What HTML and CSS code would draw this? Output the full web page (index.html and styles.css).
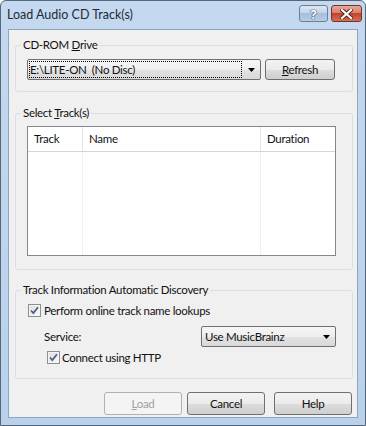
FILE: index.html
```html
<!DOCTYPE html>
<html lang="en">
<head>
    <meta charset="UTF-8">
    <meta name="viewport" content="width=device-width, initial-scale=1.0">
    <title>Load Audio CD Track(s)</title>
    <link rel="stylesheet" href="styles.css">
</head>
<body>
    <div class="window">
        <!-- Barra de titulo -->
        <div class="titlebar">
            <span class="title">Load Audio CD Track(s)</span>
            <div class="caption-buttons">
                <span class="cbtn help">?</span>
                <span class="cbtn close">
                    <svg width="13" height="10" viewBox="0 0 13 10">
                        <path d="M2 1 L11 9 M11 1 L2 9" stroke="#5a2218" stroke-width="4" stroke-linecap="square"/>
                        <path d="M2 1 L11 9 M11 1 L2 9" stroke="#ffffff" stroke-width="2.2" stroke-linecap="square"/>
                    </svg>
                </span>
            </div>
        </div>

        <div class="client">
            <!-- Unidad de CD -->
            <fieldset class="group drive">
                <legend>CD-ROM <u>D</u>rive</legend>
                <div class="drive-row">
                    <div class="combo wide">
                        <span class="combo-text focused">E:\LITE-ON&nbsp; (No Disc)</span>
                        <span class="combo-arrow">
                            <svg width="7" height="4" viewBox="0 0 7 4"><polygon points="0,0 7,0 3.5,4" fill="#000"/></svg>
                        </span>
                    </div>
                    <button class="btn refresh"><u>R</u>efresh</button>
                </div>
            </fieldset>

            <!-- Lista de pistas -->
            <fieldset class="group tracks">
                <legend>Select <u>T</u>rack(s)</legend>
                <div class="listview">
                    <div class="lv-header">
                        <span class="col">Track</span>
                        <span class="col">Name</span>
                        <span class="col last">Duration</span>
                    </div>
                    <div class="lv-body">
                        <span class="col"></span>
                        <span class="col"></span>
                        <span class="col last"></span>
                    </div>
                </div>
            </fieldset>

            <!-- Busqueda automatica -->
            <fieldset class="group discovery">
                <legend>Track Information Automatic Discovery</legend>
                <label class="check-row first">
                    <span class="checkbox">
                        <svg width="13" height="13" viewBox="0 0 13 13">
                            <path d="M3 6.5 L5.3 9 L10 3.2" fill="none" stroke="#4b6189" stroke-width="1.8"/>
                        </svg>
                    </span>
                    Perform online track name lookups
                </label>
                <div class="service-row">
                    <span>Service:</span>
                    <div class="combo small">
                        <span class="combo-text">Use MusicBrainz</span>
                        <span class="combo-arrow">
                            <svg width="7" height="4" viewBox="0 0 7 4"><polygon points="0,0 7,0 3.5,4" fill="#000"/></svg>
                        </span>
                    </div>
                </div>
                <label class="check-row second">
                    <span class="checkbox">
                        <svg width="13" height="13" viewBox="0 0 13 13">
                            <path d="M3 6.5 L5.3 9 L10 3.2" fill="none" stroke="#4b6189" stroke-width="1.8"/>
                        </svg>
                    </span>
                    Connect using HTTP
                </label>
            </fieldset>

            <!-- Botones -->
            <div class="actions">
                <button class="btn disabled"><u>L</u>oad</button>
                <button class="btn">Cancel</button>
                <button class="btn help-btn">Help</button>
            </div>
        </div>
    </div>
</body>
</html>
```

FILE: styles.css
```css
/* Ventana de dialogo estilo Vista */
body {
    margin: 0;
    font-family: Lato, "Noto Sans", sans-serif;
    font-size: 11.5px;
    letter-spacing: -0.3px;
    color: #111;
}

.window {
    width: 366px;
    height: 426px;
    box-sizing: border-box;
    border: 1px solid #55677a;
    border-radius: 6px 6px 0 0;
    background: linear-gradient(#c4d9ef, #b9d1ea);
    padding: 0 7px 7px 7px;
    display: flex;
    flex-direction: column;
}

.titlebar {
    height: 28px;
    display: flex;
    align-items: flex-start;
    justify-content: space-between;
}

.title {
    margin-top: 6px;
    margin-left: -1px;
    font-size: 12.5px;
    letter-spacing: 0;
    line-height: 16px;
    color: #1e2a36;
}

.caption-buttons {
    display: flex;
    gap: 3px;
    margin-top: 4px;
    margin-right: -4px;
}

.cbtn {
    height: 17px;
    box-sizing: border-box;
    border: 1px solid #6b7f98;
    border-radius: 3px;
    display: flex;
    align-items: center;
    justify-content: center;
}

.cbtn.help {
    width: 29px;
    background: linear-gradient(#dbe7f4 0%, #c3d5ea 45%, #a7bfdc 50%, #b7cce4 100%);
    color: #fff;
    font-family: "Noto Sans", sans-serif;
    font-weight: bold;
    font-size: 13px;
    text-shadow: 0 0 1px #30445e, 0 0 1px #30445e, 0 0 1px #30445e;
}

.cbtn.close {
    width: 31px;
    border-color: #7b3126;
    background: linear-gradient(#e6a89c 0%, #d9806e 45%, #c4432c 50%, #d0705c 100%);
}

.client {
    flex: 1;
    background: #f0f0f0;
    border: 1px solid #8fa5bd;
    padding: 7px 4px 0 6px;
    display: flex;
    flex-direction: column;
}

/* Cajas de grupo */
.group {
    margin: 0;
    border: 1px solid #d5dfe5;
    border-radius: 3px;
    min-width: 0;
}

.group legend {
    padding: 0 2px;
    margin-left: -6px;
    line-height: 16px;
}

.drive {
    padding: 6px 17px 11px 11px;
}

.drive-row {
    display: flex;
    gap: 4px;
}

.tracks {
    margin-top: 13px;
    padding: 5px 16px 13px 11px;
}

.discovery {
    margin-top: 12px;
    padding: 4px 16px 13px 11px;
}

/* Combos */
.combo {
    height: 21px;
    box-sizing: border-box;
    border: 1px solid #707070;
    border-radius: 2px;
    background: linear-gradient(#f6f6f6 0%, #eeeeee 50%, #e2e2e2 51%, #d9d9d9 100%);
    display: flex;
    align-items: center;
}

.combo.wide {
    width: 234px;
}

.combo.small {
    width: 135px;
    margin-left: auto;
}

.combo-text {
    flex: 1;
    line-height: 17px;
    padding-left: 1px;
    white-space: nowrap;
}

.combo-text.focused {
    margin-left: 1px;
    outline: 1px dotted #000;
    outline-offset: -1px;
    height: 17px;
}

.combo.small .combo-text {
    padding-left: 3px;
}

.combo-arrow {
    width: 18px;
    display: flex;
    justify-content: center;
    align-items: center;
    padding-top: 1px;
}

/* Botones */
.btn {
    height: 21px;
    box-sizing: border-box;
    border: 1px solid #707070;
    border-radius: 3px;
    background: linear-gradient(#f2f2f2 0%, #ebebeb 50%, #dddddd 51%, #cfcfcf 100%);
    font-family: inherit;
    font-size: inherit;
    letter-spacing: inherit;
    color: #111;
    padding: 0;
}

.refresh {
    width: 70px;
}

.actions {
    margin-top: auto;
    margin-bottom: 2px;
    display: flex;
    justify-content: flex-end;
    gap: 5px;
    padding-right: 1px;
}

.actions .btn {
    width: 78px;
    height: 23px;
}

.actions .help-btn {
    margin-left: 4px;
}

.btn.disabled {
    border-color: #adb2b5;
    background: #f4f4f4;
    color: #a0a0a0;
}

/* Lista de pistas */
.listview {
    height: 130px;
    box-sizing: border-box;
    border: 1px solid #828790;
    background: #fff;
    display: flex;
    flex-direction: column;
}

.lv-header,
.lv-body {
    display: grid;
    grid-template-columns: 55px 178px 1fr;
}

.lv-header {
    height: 25px;
    box-sizing: border-box;
    border-bottom: 1px solid #d5d5d5;
    line-height: 24px;
}

.lv-header .col {
    padding-left: 6px;
    border-right: 1px solid #e3e3e3;
}

.lv-body {
    flex: 1;
}

.lv-body .col {
    border-right: 1px solid #f0f0f0;
}

.listview .col.last {
    border-right: none;
}

/* Casillas */
.check-row {
    display: flex;
    align-items: center;
    height: 16px;
    gap: 3px;
}

.check-row.first {
    padding-left: 1px;
}

.check-row.second {
    margin-top: 2px;
    padding-left: 20px;
    gap: 2px;
}

.checkbox {
    width: 13px;
    height: 13px;
    box-sizing: border-box;
    border: 1px solid #8e8f8f;
    background: linear-gradient(135deg, #dcdcdc, #fbfbfb);
    box-shadow: inset 0 0 0 1px #f4f4f4;
    display: flex;
}

.checkbox svg {
    margin: -1px;
}

.service-row {
    display: flex;
    align-items: center;
    margin-top: 8px;
    padding-left: 17px;
}
```
